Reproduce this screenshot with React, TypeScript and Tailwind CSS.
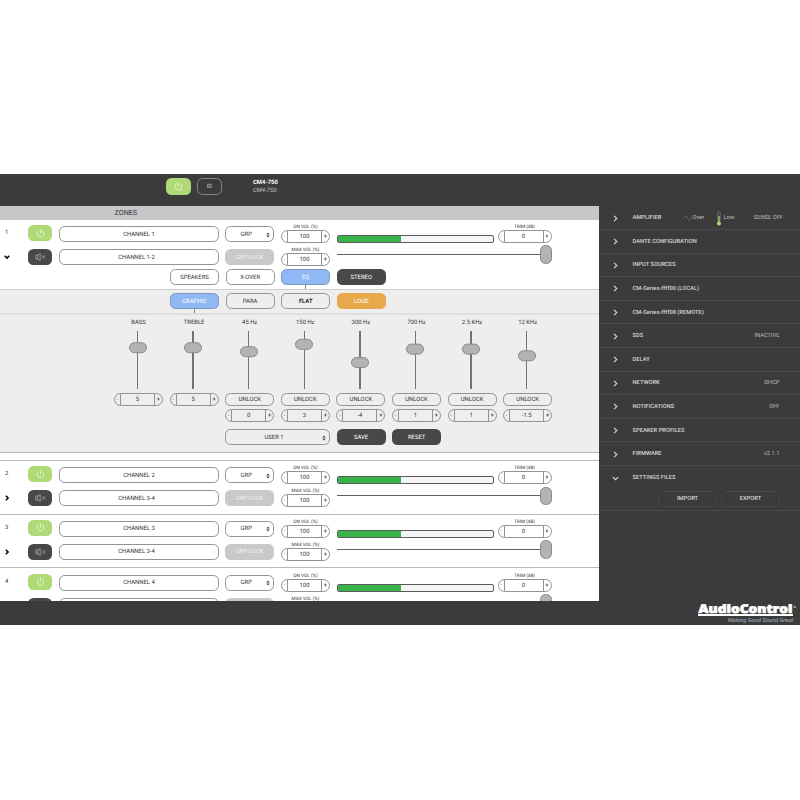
import type { ReactNode } from 'react';

// ── Data ─────────────────────────────────────────────────────────────────

interface Band {
  label: string;
  value: string;
  /** Distance of the thumb's top edge from the top of the track, px. */
  thumb: number;
  lock: boolean;
}

interface Zone {
  id: number;
  name: string;
  pair: string;
}

interface MenuItem {
  label: string;
  status?: string;
}

const BANDS: Band[] = [
  { label: 'BASS', value: '5', thumb: 11.2, lock: false },
  { label: 'TREBLE', value: '5', thumb: 11.2, lock: false },
  { label: '45 Hz', value: '0', thumb: 15.2, lock: true },
  { label: '150 Hz', value: '3', thumb: 7.8, lock: true },
  { label: '300 Hz', value: '-4', thumb: 26, lock: true },
  { label: '700 Hz', value: '1', thumb: 12.6, lock: true },
  { label: '2.5 KHz', value: '1', thumb: 12.6, lock: true },
  { label: '12 KHz', value: '-1.5', thumb: 19.3, lock: true },
];

const ZONES: Zone[] = [
  { id: 2, name: 'CHANNEL 2', pair: 'CHANNEL 3-4' },
  { id: 3, name: 'CHANNEL 3', pair: 'CHANNEL 3-4' },
  { id: 4, name: 'CHANNEL 4', pair: 'CHANNEL 3-4' },
];

const MENU: MenuItem[] = [
  { label: 'DANTE CONFIGURATION' },
  { label: 'INPUT SOURCES' },
  { label: 'CM-Series-ffff00 (LOCAL)' },
  { label: 'CM-Series-ffff08 (REMOTE)' },
  { label: 'SDS', status: 'INACTIVE' },
  { label: 'DELAY' },
  { label: 'NETWORK', status: 'DHCP' },
  { label: 'NOTIFICATIONS', status: 'OFF' },
  { label: 'SPEAKER PROFILES' },
  { label: 'FIRMWARE', status: 'v2.1.1' },
];

// ── Icons ────────────────────────────────────────────────────────────────

function PowerIcon() {
  return (
    <svg viewBox="0 0 10 10" className="h-[9px] w-[9px]" fill="none" stroke="#f3fbe6" strokeWidth="0.8" strokeLinecap="round">
      <path d="M3 1.9a3.7 3.7 0 1 0 4 0M5 .7v3.8" />
    </svg>
  );
}

function MuteIcon() {
  return (
    <svg viewBox="0 0 11 8" className="h-[8px] w-[11px]" fill="none" stroke="#b5b5b5" strokeWidth="0.7">
      <path d="M.8 2h2v4h-2zM2.8 2 5.2.6v6.8L2.8 6M7 2.3l3.2 3.4M10.2 2.3 7 5.7" />
    </svg>
  );
}

function Chevron({ down = false, className }: { down?: boolean; className: string }) {
  return (
    <svg viewBox="0 0 6 6" className={`shrink-0 ${className}`} fill="none" stroke="currentColor">
      <path d={down ? 'M.7 1.8 3 4.1l2.3-2.3' : 'M1.8.7 4.1 3 1.8 5.3'} />
    </svg>
  );
}

function SelectArrows() {
  return (
    <svg viewBox="0 0 4 6" className="h-[6px] w-[4px]" fill="#45455f">
      <path d="M2 .4 3.7 2.5H.3zM2 5.6.3 3.500h3.400z" />
    </svg>
  );
}

function Thermometer() {
  return (
    <svg viewBox="0 0 6 15" className="h-[15px] w-[6px]">
      <path d="M1.8 10V2a1.2 1.2 0 0 1 2.4 0v8" fill="none" stroke="#8c8c8c" strokeWidth="0.6" />
      <path d="M3 5v7" stroke="#b3da78" strokeWidth="1.2" />
      <circle cx="3" cy="12.5" r="2" fill="#b3da78" />
    </svg>
  );
}

// ── Controls ─────────────────────────────────────────────────────────────

function Pill({ className, children }: { className: string; children: ReactNode }) {
  return (
    <div className={`flex h-[16px] shrink-0 items-center justify-center rounded-[5.5px] ${className}`}>
      {children}
    </div>
  );
}

const OUTLINE = 'border border-[#939397] pt-px';
const DARK = 'bg-[#484848] text-white';

function Stepper({ value, className = 'w-[49px]' }: { value: string; className?: string }) {
  return (
    <div className={`flex h-[13px] shrink-0 overflow-hidden rounded-[6.5px] border border-[#939397] ${className}`}>
      <span className="flex w-[5px] items-center justify-center text-[#777]">-</span>
      <span className="flex flex-1 items-center justify-center border-x border-[#939397] pt-px">{value}</span>
      <span className="flex w-[7px] items-center justify-center pt-px font-medium">+</span>
    </div>
  );
}

function LabeledStepper({ label, value, className }: { label: string; value: string; className?: string }) {
  return (
    <div className="flex shrink-0 flex-col items-center">
      <span className="h-[6px] text-[4.700px] leading-[8px]">{label}</span>
      <Stepper value={value} className={className} />
    </div>
  );
}

function ZoneControls({ zone, open = false }: { zone: Zone; open?: boolean }) {
  return (
    <div className="flex h-[49px] shrink-0 pt-[4px]">
      <div className="flex w-[28px] shrink-0 flex-col pl-[4px]">
        <span className="flex h-[18px] items-center pl-[1px]">{zone.id}</span>
        <span className="mt-[7px] flex h-[16px] items-center">
          <Chevron down={open} className="h-[6px] w-[6px] stroke-[1.5] text-black" />
        </span>
      </div>

      <div className="flex w-[31px] shrink-0 flex-col gap-[8px] pt-[1px]">
        <Pill className="w-[24px] bg-[#b0d977]"><PowerIcon /></Pill>
        <Pill className={`w-[24px] ${DARK}`}><MuteIcon /></Pill>
      </div>

      <div className="flex w-[166px] shrink-0 flex-col gap-[7px] pt-[2px]">
        <Pill className={`w-[160px] bg-white ${OUTLINE}`}>{zone.name}</Pill>
        <Pill className={`w-[160px] bg-white pr-[5px] ${OUTLINE}`}>{zone.pair}</Pill>
      </div>

      <div className="flex w-[56px] shrink-0 flex-col gap-[7px] pt-[2px]">
        <div className={`flex h-[16px] w-[49px] items-center justify-between rounded-[5.5px] pr-[3px] pl-[14.5px] ${OUTLINE}`}>
          GRP
          <SelectArrows />
        </div>
        <Pill className="w-[49px] bg-[#c9c9c9] pt-px text-[#f2f2f2]">GRP LOCK</Pill>
      </div>

      <div className="flex w-[55.5px] shrink-0 flex-col items-start gap-[4px]">
        <LabeledStepper label="ON VOL (%)" value="100" />
        <LabeledStepper label="MAX VOL (%)" value="100" />
      </div>

      <div className="flex w-[215px] shrink-0 flex-col">
        <div className="flex h-[19px] items-end gap-[4px]">
          <div className="h-[8px] w-[157.5px] overflow-hidden rounded-[2px] border border-[#5a5a5a] bg-[#f5f5f5]">
            <div className="h-full w-[63px] bg-[#37b34a]" />
          </div>
          <LabeledStepper label="TRIM (dB)" value="0" className="w-[54px]" />
        </div>
        <div className="mt-[2px] flex h-[19px] items-center">
          <div className="h-px w-[203.5px] bg-[#606060]" />
          <div className="h-[18.5px] w-[11.5px] rounded-[5.5px] border border-[#888] bg-[#b3b3b3]" />
        </div>
      </div>
    </div>
  );
}

function EqBand({ band }: { band: Band }) {
  return (
    <div className="flex w-[55.6px] shrink-0 flex-col items-start">
      <div className="flex w-[49px] flex-col items-center">
        <span className="h-[8px] leading-[10px]">{band.label}</span>
        <div className="mt-[5px] mr-[2px] flex h-[58px] w-[18px] justify-center">
          <div className="h-full w-[1.5px] bg-[#747474]">
            <div
              className="-ml-[8.25px] h-[11px] w-[18px] rounded-[5.5px] border border-[#8a8a8a] bg-[#b3b3b3]"
              style={{ transform: `translateY(${band.thumb}px)` }}
            />
          </div>
        </div>
        <div className="mt-[4px] flex flex-col gap-[3px]">
          {band.lock && (
            <div className={`flex h-[13px] w-[49px] items-center justify-center rounded-[5.5px] ${OUTLINE}`}>UNLOCK</div>
          )}
          <Stepper value={band.value} />
        </div>
      </div>
    </div>
  );
}

function EqPanel() {
  return (
    <div className="h-[164px] shrink-0 border-y border-t-[#cfcfcf] border-b-[#b5b5b5] bg-[#eee]">
      <div className="flex h-[25px] gap-[6.6px] border-b-2 border-[#dfdfdf] pt-[3px] pl-[170px]">
        <div className="flex flex-col items-center">
          <Pill className="w-[49px] border border-[#7d96bd] bg-[#8fb8f4] pt-px text-white">GRAPHIC</Pill>
          <div className="h-[4px] w-px shrink-0 bg-[#888]" />
        </div>
        <Pill className={`w-[49px] ${OUTLINE}`}>PARA</Pill>
        <Pill className={`w-[49px] font-medium text-black ${OUTLINE}`}>FLAT</Pill>
        <Pill className="w-[49px] bg-[#e8a84c] pt-px text-white">LOUD</Pill>
      </div>
      <div className="flex h-[111px] pt-[3px] pl-[114px]">
        {BANDS.map((band) => (
          <EqBand key={band.label} band={band} />
        ))}
      </div>
      <div className="flex gap-[6.6px] pt-[3px] pl-[225px]">
        <div className={`flex h-[16px] w-[105px] items-center justify-between rounded-[5.5px] pr-[3px] pl-[38.5px] ${OUTLINE}`}>
          USER 1
          <SelectArrows />
        </div>
        <Pill className={`w-[49px] pt-px ${DARK}`}>SAVE</Pill>
        <Pill className={`w-[49px] pt-px ${DARK}`}>RESET</Pill>
      </div>
    </div>
  );
}

// ── Sidebar ──────────────────────────────────────────────────────────────

function Sidebar() {
  return (
    <aside className="flex flex-1 flex-col text-[5.75px] text-[#d6d6d6]">
      <div className="flex h-[24px] shrink-0 items-center border-b border-[#484848] pt-px pr-[17px] pl-[13px]">
        <Chevron className="h-[7px] w-[7px]" />
        <span className="ml-[13.5px] w-[50px] font-medium">AMPLIFIER</span>
        <svg viewBox="0 0 9 6" className="h-[6px] w-[9px]" fill="none" stroke="#888" strokeWidth="0.6">
          <path d="M.5 3.5C1.5.5 3 .5 4.500 3s3 2.500 4-.5" />
        </svg>
        <span className="ml-[1px] w-[23px] text-[#bdbdbd]">Over</span>
        <Thermometer />
        <span className="ml-[2px] text-[#bdbdbd]">Low</span>
        <span className="ml-auto text-[#bdbdbd]">SENSE OFF</span>
      </div>
      {MENU.map((item) => (
        <div key={item.label} className="flex h-[23.6px] shrink-0 items-center border-b border-[#484848] pt-px pr-[20.5px] pl-[13px]">
          <Chevron className="h-[7px] w-[7px]" />
          <span className="ml-[13.5px] font-medium">{item.label}</span>
          <span className="ml-auto text-[#bdbdbd]">{item.status}</span>
        </div>
      ))}
      <div className="h-[45.5px] shrink-0 border-b border-[#484848] pr-[20px] pl-[13px]">
        <div className="flex h-[24px] items-center pt-px">
          <Chevron down className="h-[7px] w-[7px]" />
          <span className="ml-[13.5px] font-medium">SETTINGS FILES</span>
        </div>
        <div className="flex justify-end gap-[4px] pt-[1px]">
          <Pill className="w-[59px] border border-[#484848] pt-px font-medium">IMPORT</Pill>
          <Pill className="w-[59px] border border-[#484848] pt-px font-medium">EXPORT</Pill>
        </div>
      </div>
    </aside>
  );
}

function Logo() {
  return (
    <svg viewBox="0 0 104 22" className="h-[22px] w-[104px]" fill="#fff">
      <text x="2.5" y="8.8" fontFamily="Open Sans, sans-serif" fontWeight="800" fontSize="12" stroke="#fff" strokeWidth="0.7" textLength="94" lengthAdjust="spacingAndGlyphs">
        AudioControl
      </text>
      <text x="97.5" y="3.5" fontFamily="Roboto, sans-serif" fontSize="3">®</text>
      <path d="M2 9.9h95v2H2z" />
      <text x="32" y="18" fontFamily="Roboto, sans-serif" fontStyle="italic" fontSize="5.6" fill="#a9b9c6" textLength="65" lengthAdjust="spacingAndGlyphs">
        Making Good Sound Great
      </text>
      <text x="97.5" y="16" fontFamily="Roboto, sans-serif" fontSize="2" fill="#a9b9c6">™</text>
    </svg>
  );
}

// ── Page ─────────────────────────────────────────────────────────────────

export default function App() {
  return (
    <div className="h-[800px] w-[800px] overflow-hidden bg-white pt-[174px] font-['Roboto',sans-serif] text-[5.9px] leading-[8px] text-[#333337] [text-rendering:geometricPrecision]">
      <div className="flex h-[451px] flex-col bg-[#3b3b3b]">
        <header className="flex h-[32px] shrink-0 pt-[4px] pl-[166px]">
          <Pill className="h-[17px] w-[25px] bg-[#b0d977]"><PowerIcon /></Pill>
          <Pill className="ml-[6px] h-[17px] w-[25px] border border-[#858585] text-[#ccc]">ID</Pill>
          <div className="ml-[31px] flex flex-col pt-px">
            <span className="font-bold text-white">CM4-750</span>
            <span className="text-[#c5c5c5] italic">CM4-750:</span>
          </div>
        </header>

        <div className="flex h-[395px] shrink-0">
          <main className="flex h-[395px] w-[599px] shrink-0 flex-col overflow-hidden bg-white">
            <div className="h-[14px] shrink-0 bg-[#c7c7ca] pl-[114.500px] text-[7.2px] leading-[13px]">ZONES</div>

            <ZoneControls zone={{ id: 1, name: 'CHANNEL 1', pair: 'CHANNEL 1-2' }} open />
            <div className="flex h-[20px] shrink-0 gap-[6.6px] pl-[170px]">
              <Pill className={`w-[49px] ${OUTLINE}`}>SPEAKERS</Pill>
              <Pill className={`w-[49px] ${OUTLINE}`}>X-OVER</Pill>
              <div className="flex flex-col items-center">
                <Pill className="w-[49px] border border-[#7d96bd] bg-[#8fb8f4] pt-px text-white">EQ</Pill>
                <div className="h-[4px] w-px bg-[#888]" />
              </div>
              <Pill className={`w-[49px] pt-px ${DARK}`}>STEREO</Pill>
            </div>
            <EqPanel />
            <div className="h-[8px] shrink-0 border-b border-[#bbb]" />

            {ZONES.map((zone) => (
              <div key={zone.id} className="h-[53.6px] shrink-0 border-b border-[#bbb] pt-[0.4px]">
                <ZoneControls zone={zone} />
              </div>
            ))}
          </main>
          <Sidebar />
        </div>

        <footer className="flex justify-end pt-[2.5px]">
          <Logo />
        </footer>
      </div>
    </div>
  );
}
